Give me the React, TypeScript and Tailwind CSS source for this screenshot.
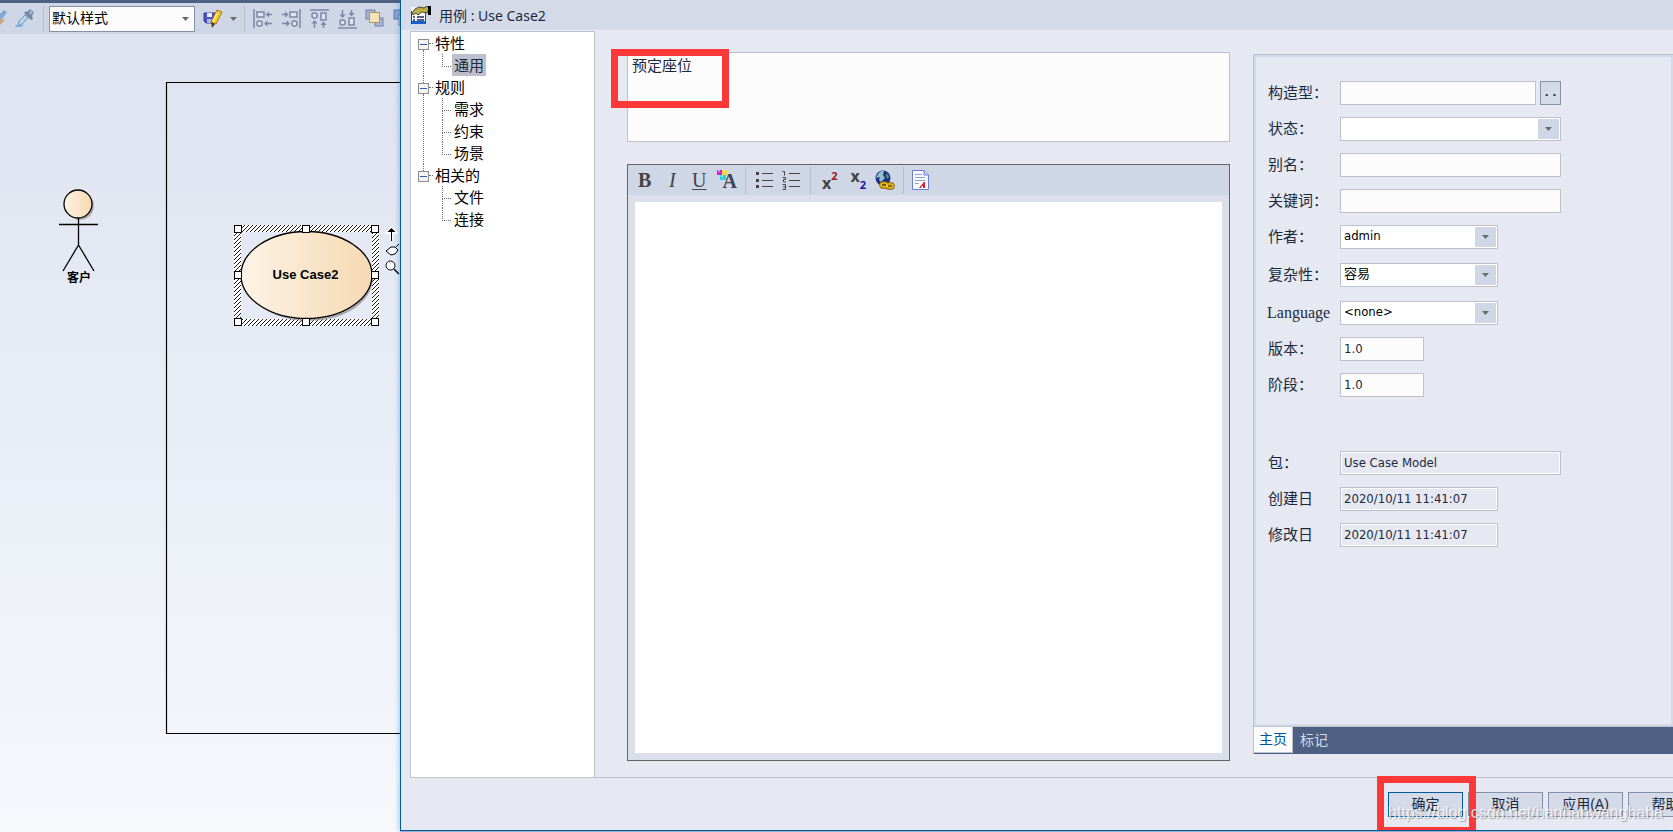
import React, { useState } from 'react';

interface TreeGroup {
  label: string;
  children: string[];
}

const TREE: TreeGroup[] = [
  { label: '特性', children: ['通用'] },
  { label: '规则', children: ['需求', '约束', '场景'] },
  { label: '相关的', children: ['文件', '连接'] },
];

/* ---------- Modelling window behind the dialog ---------- */

const Separator: React.FC = () => <span className="block h-[27px] w-px shrink-0 bg-[#b9bfcc]" />;

const BrushIcon = () => (
  <svg width="7" height="20" viewBox="0 0 7 20" className="shrink-0">
    <path d="M0 5L4 1L7 3L3 9L0 10Z" fill="#7fa6d8" />
    <path d="M0 10L3 9L4 12L0 16Z" fill="#c9a67c" />
  </svg>
);

const DropperIcon = () => (
  <svg width="20" height="20" viewBox="0 0 20 20" className="shrink-0">
    <path d="M12 3L15 0L19 3L17 7L18 10L16 11L9 4L11 2Z" fill="#7486a8" />
    <path d="M16 1L18 3L15 6L14 4Z" fill="#a8b6cf" />
    <path d="M10 6L13 9L7 15L3 17L4 12Z" fill="#b5d4ec" stroke="#6f93be" />
    <path d="M0 17L4 15L9 16L6 18H1Z" fill="#78aee0" />
  </svg>
);

const SaveStyleIcon = () => (
  <svg width="20" height="20" viewBox="0 0 20 20">
    <path d="M1 4H12V14H3L1 12Z" fill="#4a53c4" stroke="#3038a0" />
    <rect x="4" y="4" width="5" height="4" fill="#e8ecfa" />
    <rect x="4" y="10" width="5" height="4" fill="#aab4ea" />
    <path d="M14 1L19 3L13 15L8 13Z" fill="#f5c92c" stroke="#a97a10" />
    <path d="M14 4L10 13" stroke="#fff09a" strokeWidth="1.5" />
    <path d="M8 13L12 15L9 19Z" fill="#4b3a22" />
  </svg>
);

const ALIGN_TRANSFORM = {
  left: '',
  right: 'translate(20 0) scale(-1 1)',
  top: 'rotate(90 10 10)',
  bottom: 'translate(0 20) scale(1 -1) rotate(90 10 10)',
};

const AlignIcon: React.FC<{ kind: keyof typeof ALIGN_TRANSFORM }> = ({ kind }) => (
  <svg width="20" height="20" viewBox="0 0 20 20" fill="none" stroke="#7f86a3" strokeWidth="1.5">
    <g transform={ALIGN_TRANSFORM[kind]}>
      <path d="M1 0V19" />
      <rect x="4" y="3" width="7" height="5" fill="#dfe4f0" />
      <rect x="4" y="12" width="5" height="5" rx="2" fill="#dfe4f0" />
      <path d="M14 5.5H19M12 14.5H19" />
      <path d="M12.5 5.5L16 2.5V8.5ZM11 14.5L14.5 11.5V17.5Z" fill="#7f86a3" stroke="none" />
    </g>
  </svg>
);

const FrontIcon = () => (
  <svg width="20" height="20" viewBox="0 0 20 20">
    <rect x="1" y="1" width="9" height="9" fill="#a9b3d3" stroke="#7580a8" />
    <rect x="10" y="9" width="8" height="8" fill="#a9b3d3" stroke="#7580a8" />
    <rect x="4.5" y="3.5" width="10" height="10" fill="#f5e3b4" stroke="#a8946a" />
  </svg>
);

const BackIcon = () => (
  <svg width="20" height="20" viewBox="0 0 20 20">
    <rect x="1" y="1" width="11" height="9" fill="#8ba4d3" stroke="#6078ac" />
    <rect x="6" y="6" width="10" height="10" fill="#f1f3f8" stroke="#7580a8" />
  </svg>
);

const Caret: React.FC = () => (
  <svg width="7" height="4" viewBox="0 0 7 4" className="shrink-0">
    <path d="M0 0H7L3.5 4Z" fill="#6b6b6b" />
  </svg>
);

const StyleToolbar: React.FC = () => (
  <div className="flex h-[34px] items-center overflow-hidden border-t-[3px] border-[#4d6082] bg-[#cfd6e6]">
    <BrushIcon />
    <span className="mx-2 shrink-0">
      <DropperIcon />
    </span>
    <Separator />
    <span className="relative ml-[5px] flex w-[146px] shrink-0 items-center">
      <select
        aria-label="样式"
        className="h-[26px] w-full appearance-none border border-[#8591a8] bg-[#fcfcfc] pl-[2px] text-[14px] text-black"
      >
        <option>默认样式</option>
      </select>
      <span className="pointer-events-none absolute right-[6px]">
        <Caret />
      </span>
    </span>
    <button className="ml-2 shrink-0" title="保存样式">
      <SaveStyleIcon />
    </button>
    <button className="mx-[7px] shrink-0" title="更多">
      <Caret />
    </button>
    <Separator />
    <div className="ml-2 flex shrink-0 gap-2">
      <button title="左对齐"><AlignIcon kind="left" /></button>
      <button title="右对齐"><AlignIcon kind="right" /></button>
      <button title="顶端对齐"><AlignIcon kind="top" /></button>
      <button title="底端对齐"><AlignIcon kind="bottom" /></button>
      <button title="置于顶层"><FrontIcon /></button>
      <button title="置于底层"><BackIcon /></button>
    </div>
  </div>
);

const HANDLES = [
  [234, 191], [302, 191], [371, 191],
  [234, 237], [371, 237],
  [234, 284], [302, 284], [371, 284],
];

const Diagram: React.FC = () => (
  <div className="relative flex-1 overflow-hidden bg-linear-to-b from-[#dde3f0] to-[#f6f8fc]">
    <svg width="400" height="720" viewBox="0 0 400 720" className="absolute top-0 left-0">
      <defs>
        <linearGradient id="cream">
          <stop offset="0" stopColor="#fdf3e6" />
          <stop offset="1" stopColor="#f6d9b2" />
        </linearGradient>
        <pattern id="hatch" width="4" height="4" patternUnits="userSpaceOnUse">
          <rect width="4" height="4" fill="#fff" />
          <path d="M-1 1L1 -1M0 4L4 0M3 5L5 3" stroke="#000" strokeWidth="0.9" />
        </pattern>
      </defs>

      {/* system boundary */}
      <path d="M401 48.5H166.5V699.5H401" fill="none" stroke="#000" strokeWidth="1.2" />

      {/* actor */}
      <circle cx="80" cy="172" r="14" fill="#9a9a9a" opacity="0.7" />
      <circle cx="78" cy="170" r="14" fill="url(#cream)" stroke="#000" strokeWidth="1.3" />
      <path d="M78.5 184V211M59 190.5H98M78.5 211L63 237M78.5 211L94 237" fill="none" stroke="#000" strokeWidth="1.3" />

      {/* use case */}
      <path d="M234 191H379V292H234ZM241 198V285H372V198Z" fill="url(#hatch)" fillRule="evenodd" />
      <ellipse cx="309" cy="244" rx="64" ry="43" fill="#8f8f8f" opacity="0.7" />
      <ellipse cx="306.5" cy="241" rx="65.5" ry="43.5" fill="url(#cream)" stroke="#000" strokeWidth="1.3" />
      {HANDLES.map(([x, y]) => (
        <rect key={`${x}-${y}`} x={x + 0.5} y={y + 0.5} width="7" height="7" fill="#fff" stroke="#000" />
      ))}

      {/* quick linker */}
      <path d="M391.5 206V196M387.5 198.5H395.5L391.5 194Z" stroke="#fff" strokeWidth="3" fill="#fff" />
      <path d="M391.5 207V196" stroke="#000" />
      <path d="M387.5 198H395.5L391.5 194Z" fill="#000" />
      <path d="M386 217L391 213H395L398 216L395 220L391 221L386 217M396 213L399 210" fill="#fff" stroke="#000" />
      <circle cx="390.5" cy="231.5" r="4.5" fill="#fff" stroke="#000" />
      <path d="M394 235L399 240" stroke="#000" strokeWidth="1.5" />
    </svg>
    <span className="absolute top-[235px] left-[48px] w-[62px] text-center text-[12px] leading-[18px] font-bold text-black">
      客户
    </span>
    <span className="absolute top-[232px] left-[240px] w-[131px] text-center text-[13px] leading-[18px] font-bold text-black">
      Use Case2
    </span>
  </div>
);

/* ---------- Dialog ---------- */

const PropertiesIcon = () => (
  <svg width="20" height="19" viewBox="0 0 20 19">
    <rect x="0.5" y="3.5" width="14" height="14" fill="#fff" stroke="#2a3f78" />
    <path d="M1 15H15V18H1Z" fill="#1660c8" />
    <path d="M0 1H9V5H0Z" fill="#f4f4f4" />
    <path d="M1 7L4 3L8 1L13 2L16 0L18 3L16 7L11 6L7 9L5 7L2 9Z" fill="#b9b04a" stroke="#2b2b18" strokeWidth="0.8" />
    <path d="M17 0H20V9H17Z" fill="#000" />
    <path d="M2 11H4M6 11H13M2 14H4M6 14H13" stroke="#1d2a5c" strokeWidth="1.5" />
  </svg>
);

const NavTree: React.FC = () => {
  const [selected, setSelected] = useState('通用');
  return (
    <nav className="w-[185px] shrink-0 border-x border-t border-[#bcc1cd] bg-white pl-[7px] text-[15px] leading-[20px] text-black">
      <ul>
        {TREE.map((group, g) => (
          <li key={group.label} className="flex">
            <div className="flex w-[11px] flex-col">
              <span className={g === 0 ? 'h-[7px]' : 'ml-[5px] h-[7px] border-l border-dotted border-[#707070]'} />
              <span className="flex h-[11px] items-center border border-[#8c8c8c] bg-[#f4f4f4] px-px">
                <span className="h-px w-full bg-[#3b5bb0]" />
              </span>
              {g < TREE.length - 1 && <span className="ml-[5px] flex-1 border-l border-dotted border-[#707070]" />}
            </div>
            <div>
              <div className="flex h-[22px] items-center">
                <span className="w-[4px] border-t border-dotted border-[#707070]" />
                <span className="ml-[2px] pt-[2px]">{group.label}</span>
              </div>
              <ul className="pl-[13px]">
                {group.children.map((item, i) => (
                  <li key={item} className="flex h-[22px]">
                    <span className="mr-px flex w-[9px] flex-col">
                      <span className="h-[13px] border-b border-l border-dotted border-[#707070]" />
                      {i < group.children.length - 1 && (
                        <span className="flex-1 border-l border-dotted border-[#707070]" />
                      )}
                    </span>
                    <button
                      onClick={() => setSelected(item)}
                      className={`px-[2px] pt-[2px] ${selected === item ? 'bg-[#bcc0cc] text-[#1b293e]' : ''}`}
                    >
                      {item}
                    </button>
                  </li>
                ))}
              </ul>
            </div>
          </li>
        ))}
      </ul>
    </nav>
  );
};

const TextColorIcon = () => (
  <span className="relative block h-5 w-5">
    <svg width="12" height="12" viewBox="0 0 12 12" className="absolute top-0 left-0">
      <rect width="5" height="5" fill="#d81fd0" />
      <rect x="5" width="5" height="5" fill="#f2dc3a" />
      <rect x="3" y="5" width="6" height="5" fill="#2fd0d8" />
      <path d="M1 1H3M6 1H8M4 6H6" stroke="#fff" />
    </svg>
    <span className="absolute right-0 bottom-0 font-['Liberation_Serif',serif] text-[20px] leading-[18px] font-bold text-[#3e4358]">A</span>
  </span>
);

const ListIcon = () => (
  <svg width="17" height="18" viewBox="0 0 17 18" stroke="#444">
    <path d="M0 2.5H3M0 9.5H3M0 15.5H3" strokeWidth="3" />
    <path d="M6 2.5H17M6 9.5H17M6 15.5H17" />
  </svg>
);

const NumberListIcon = () => (
  <svg width="18" height="20" viewBox="0 0 18 20" fill="none" stroke="#444">
    <path d="M0.5 1.5H2.5V5.5M0.5 7.5H3.5V9.5H1.5V12H4M0.5 14.5H3.5V19.5H0.5M1 17H3.5" />
    <path d="M7 3.5H18M7 10.5H18M7 16.5H18" />
  </svg>
);

const GlobeLinkIcon = () => (
  <svg width="20" height="20" viewBox="0 0 20 20">
    <circle cx="8" cy="8" r="7.5" fill="#1c2f86" />
    <path d="M3 4Q6 0 9 1L8 5L10 8L6 12L4 10L5 7L1 8Z" fill="#8fc0cf" />
    <path d="M11 3L14 6L13 9L11 7Z" fill="#5a8a78" />
    <g fill="none" stroke="#7a5a00" strokeWidth="3.4">
      <rect x="6" y="13" width="6" height="4" rx="2" />
      <rect x="12" y="14" width="6" height="4" rx="2" />
    </g>
    <g fill="none" stroke="#f0c419" strokeWidth="1.6">
      <rect x="6" y="13" width="6" height="4" rx="2" />
      <rect x="12" y="14" width="6" height="4" rx="2" />
    </g>
  </svg>
);

const DocumentIcon = () => (
  <svg width="17" height="20" viewBox="0 0 17 20">
    <path d="M0.5 0.5H12L16.5 5V19.5H0.5Z" fill="#f8faff" stroke="#6a7fd0" />
    <path d="M12 0.5V5H16.5" fill="#c9d3f4" stroke="#6a7fd0" />
    <path d="M3 4.5H10M3 7.5H13M3 10.5H13M3 13.5H7" stroke="#94a0cc" />
    <path d="M7 18L12 12H13V18H11V16H10L9 18Z" fill="#e0182c" />
  </svg>
);

const NotesEditor: React.FC = () => (
  <div className="flex flex-1 flex-col border border-[#646468] bg-[#dbdfea]">
    <div className="flex h-[30px] items-center bg-[#cfd6e6] pl-[10px] font-['Liberation_Serif',serif] text-[20px] leading-[22px] text-[#444]">
      <button className="w-[16px] text-left font-bold" title="加粗">B</button>
      <button className="ml-[15px] w-[14px] text-left italic" title="倾斜">I</button>
      <button className="ml-[9px] w-[16px] text-left underline decoration-1 underline-offset-2" title="下划线">U</button>
      <button className="mr-2 ml-[9px]" title="字体颜色"><TextColorIcon /></button>
      <Separator />
      <button className="ml-[10px]" title="项目符号"><ListIcon /></button>
      <button className="mr-[10px] ml-[9px]" title="编号"><NumberListIcon /></button>
      <Separator />
      <button className="ml-[11px] flex h-5 items-end font-['Open_Sans',sans-serif] text-[16px] leading-[14px] font-bold" title="上标">
        x<span className="mb-[9px] text-[11px] leading-[11px] text-[#a01818]">2</span>
      </button>
      <button className="ml-[13px] flex h-5 items-start font-['Open_Sans',sans-serif] text-[16px] leading-[12px] font-bold" title="下标">
        x<span className="mt-[9px] text-[11px] leading-[11px] text-[#1818a8]">2</span>
      </button>
      <button className="mr-2 ml-[9px]" title="超链接"><GlobeLinkIcon /></button>
      <Separator />
      <button className="ml-2" title="新建文档"><DocumentIcon /></button>
    </div>
    <textarea aria-label="备注" className="m-[7px] flex-1 resize-none bg-white p-1 outline-none" />
  </div>
);

const labelClass = 'w-[72px] shrink-0 whitespace-nowrap text-[15px] leading-[20px]';
const boxClass = "h-[24px] border border-[#bcc1cd] pb-[2px] pl-[3px] font-['DejaVu_Sans_Condensed','Noto_Sans_CJK_SC',sans-serif] text-[13px]";

interface FieldProps {
  id: string;
  label: string;
  width: string;
  value?: string;
  readOnly?: boolean;
}

const TextField: React.FC<FieldProps> = ({ id, label, width, value = '', readOnly }) => (
  <div className="flex items-center">
    <label htmlFor={id} className={labelClass}>{label}</label>
    <input
      id={id}
      defaultValue={value}
      readOnly={readOnly}
      className={`${boxClass} ${width} ${readOnly ? 'bg-[#e6e9f2] inset-ring inset-ring-white' : 'bg-[#fcfcfc]'}`}
    />
  </div>
);

const SelectField: React.FC<FieldProps & { serif?: boolean }> = ({ id, label, width, value = '', serif }) => (
  <div className="flex items-center">
    <label
      htmlFor={id}
      className={serif ? "-ml-px w-[73px] shrink-0 font-['Liberation_Serif',serif] text-[16px] leading-[20px]" : labelClass}
    >
      {label}
    </label>
    <span className={`relative flex ${width}`}>
      <select id={id} className={`${boxClass} w-full appearance-none bg-white text-black`}>
        <option>{value}</option>
      </select>
      <span className="pointer-events-none absolute top-[2px] right-[2px] flex h-[20px] w-[21px] items-center justify-center bg-[#cfd6e6]">
        <Caret />
      </span>
    </span>
  </div>
);

const DetailsPanel: React.FC = () => (
  <div className="flex w-[420px] shrink-0 flex-col border-l border-[#bcc1cd]">
    <div className="flex-1 border-t border-b border-[#bcc1cd]">
      <div className="h-full border-2 border-[#d5dae8] pt-[24px] pl-3">
        <div className="flex flex-col gap-3">
          <div className="flex items-center">
            <label htmlFor="stereotype" className={labelClass}>构造型：</label>
            <input id="stereotype" className={`${boxClass} w-[196px] bg-[#fcfcfc]`} />
            <button className="ml-1 h-[24px] w-[21px] border border-[#8591a8] bg-[#d5dae8] font-['Liberation_Mono',monospace] text-[13px] leading-[22px] font-bold">
              ..
            </button>
          </div>
          <SelectField id="status" label="状态：" width="w-[221px]" />
          <TextField id="alias" label="别名：" width="w-[221px]" />
          <TextField id="keywords" label="关键词：" width="w-[221px]" />
          <SelectField id="author" label="作者：" width="w-[158px]" value="admin" />
        </div>
        <div className="mt-[14px] flex flex-col gap-[14px]">
          <SelectField id="complexity" label="复杂性：" width="w-[158px]" value="容易" />
          <SelectField id="language" label="Language" width="w-[158px]" value="<none>" serif />
        </div>
        <div className="mt-3 flex flex-col gap-3">
          <TextField id="version" label="版本：" width="w-[84px]" value="1.0" />
          <TextField id="phase" label="阶段：" width="w-[84px]" value="1.0" />
        </div>
        <div className="mt-[54px] flex flex-col gap-3">
          <TextField id="package" label="包：" width="w-[221px]" value="Use Case Model" readOnly />
          <TextField id="created" label="创建日" width="w-[158px]" value="2020/10/11 11:41:07" readOnly />
          <TextField id="modified" label="修改日" width="w-[158px]" value="2020/10/11 11:41:07" readOnly />
        </div>
      </div>
    </div>
    <div className="flex h-[27px] border-b border-[#4d6082] bg-[#4d6082] text-[14px]">
      <button className="w-[39px] border-r border-b border-[#bcc1cd] bg-[#fcfcfc] text-[#00539c]">主页</button>
      <button className="px-[7px] text-[#d5dae8]">标记</button>
    </div>
  </div>
);

const DialogButton: React.FC<{ primary?: boolean; children: React.ReactNode }> = ({ primary, children }) => (
  <button
    className={`h-[25px] w-[75px] shrink-0 border bg-[#d5dae8] text-[14px] leading-[23px] ${
      primary ? 'border-[#005a9e]' : 'border-[#8591a8]'
    }`}
  >
    {children}
  </button>
);

const PropertiesDialog: React.FC = () => {
  const [name, setName] = useState('预定座位');
  return (
    <section className="z-10 mb-px flex min-w-0 flex-1 flex-col overflow-hidden border-b border-l border-[#005a9e] bg-[#e6e9f2] text-[#1b293e] shadow-[0_0_6px_rgba(0,90,158,0.4)]">
      <header className="flex h-[30px] items-center gap-2 bg-[#d5dae8] pl-[10px]">
        <PropertiesIcon />
        <h1 className="font-['Noto_Sans','Noto_Sans_CJK_SC',sans-serif] text-[14px]">用例 : Use Case2</h1>
      </header>

      <div className="mt-px ml-[9px] flex flex-1 border-b border-[#bcc1cd]">
        <NavTree />
        <main className="ml-8 flex min-w-0 flex-1 flex-col pt-[21px] pb-4">
          <div className="relative flex">
            <textarea
              aria-label="名称"
              value={name}
              onChange={(e) => setName(e.target.value)}
              className="h-[90px] w-full resize-none border border-[#bcc1cd] bg-[#fcfcfc] px-1 pt-[2px] text-[15px] leading-[22px] outline-none"
            />
            <span className="pointer-events-none absolute -top-[3px] -left-4 h-[59px] w-[118px] border-[7px] border-[#fc3838]" />
          </div>
          <div className="mt-[22px] flex flex-1">
            <NotesEditor />
          </div>
        </main>
        <div className="ml-[23px] flex pt-[23px] pb-[23px]">
          <DetailsPanel />
        </div>
      </div>

      <footer className="-mr-[30px] flex h-[52px] items-center justify-end gap-[5px]">
        <span className="relative flex">
          <DialogButton primary>确定</DialogButton>
          <span className="pointer-events-none absolute -top-4 -left-[11px] h-[58px] w-[99px] border-[7px] border-[#fc3838]" />
        </span>
        <DialogButton>取消</DialogButton>
        <DialogButton>
          应用(<u>A</u>)
        </DialogButton>
        <DialogButton>帮助</DialogButton>
      </footer>
    </section>
  );
};

const App: React.FC = () => (
  <div className="relative flex min-h-screen overflow-hidden bg-[#b4c3da] font-['Liberation_Sans','Noto_Sans_CJK_SC',sans-serif]">
    <div className="flex w-[400px] shrink-0 flex-col">
      <StyleToolbar />
      <Diagram />
    </div>
    <PropertiesDialog />
    <span className="pointer-events-none absolute right-[10px] bottom-[9px] z-20 text-[16px] leading-[20px] text-white/80 [text-shadow:1px_1px_1px_rgba(0,0,0,0.3)]">
      https://blog.csdn.net/hanhanwanghaha
    </span>
  </div>
);

export default App;
